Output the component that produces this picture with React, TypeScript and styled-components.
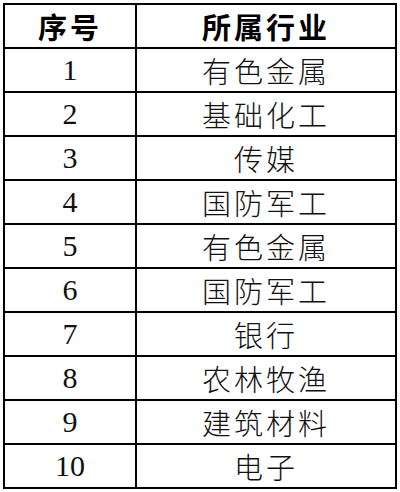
import React from "react";
import { styled, createGlobalStyle } from "styled-components";

const rows: [string, string][] = [
  ["1", "有色金属"],
  ["2", "基础化工"],
  ["3", "传媒"],
  ["4", "国防军工"],
  ["5", "有色金属"],
  ["6", "国防军工"],
  ["7", "银行"],
  ["8", "农林牧渔"],
  ["9", "建筑材料"],
  ["10", "电子"],
];

const GlobalStyle = createGlobalStyle`
  html, body {
    margin: 0;
    padding: 0;
    background: #fff;
  }
`;

const Page = styled.div`
  padding: 3px 0 0 3px;
`;

const Table = styled.table`
  width: 394px;
  border-collapse: collapse;
  table-layout: fixed;
  border: 2px solid #000;
`;

const Cell = styled.td<{ $num?: boolean }>`
  height: 42px;
  padding: 0;
  border: 2px solid #000;
  text-align: center;
  vertical-align: middle;
  color: #111;
  font-family: ${(p) =>
    p.$num
      ? `"Liberation Serif", "Noto Sans CJK SC", serif`
      : `"Noto Sans CJK SC", sans-serif`};
  font-size: ${(p) => (p.$num ? "30px" : "29px")};
  font-weight: ${(p) => (p.$num ? 400 : 300)};
  letter-spacing: ${(p) => (p.$num ? "0" : "3px")};
  line-height: 1;
`;

const HeadCell = styled.th<{ $narrow?: boolean }>`
  height: 42px;
  padding: 0;
  border: 2px solid #000;
  width: ${(p) => (p.$narrow ? "130px" : "auto")};
  font-family: "Noto Sans CJK SC", sans-serif;
  font-size: 29px;
  font-weight: 700;
  letter-spacing: 3px;
  color: #000;
  line-height: 1;
`;

export default function App() {
  return (
    <>
      <GlobalStyle />
      <Page>
        <Table>
          <thead>
            <tr>
              <HeadCell $narrow>序号</HeadCell>
              <HeadCell>所属行业</HeadCell>
            </tr>
          </thead>
          <tbody>
            {rows.map(([n, name]) => (
              <tr key={n}>
                <Cell $num>{n}</Cell>
                <Cell>{name}</Cell>
              </tr>
            ))}
          </tbody>
        </Table>
      </Page>
    </>
  );
}
